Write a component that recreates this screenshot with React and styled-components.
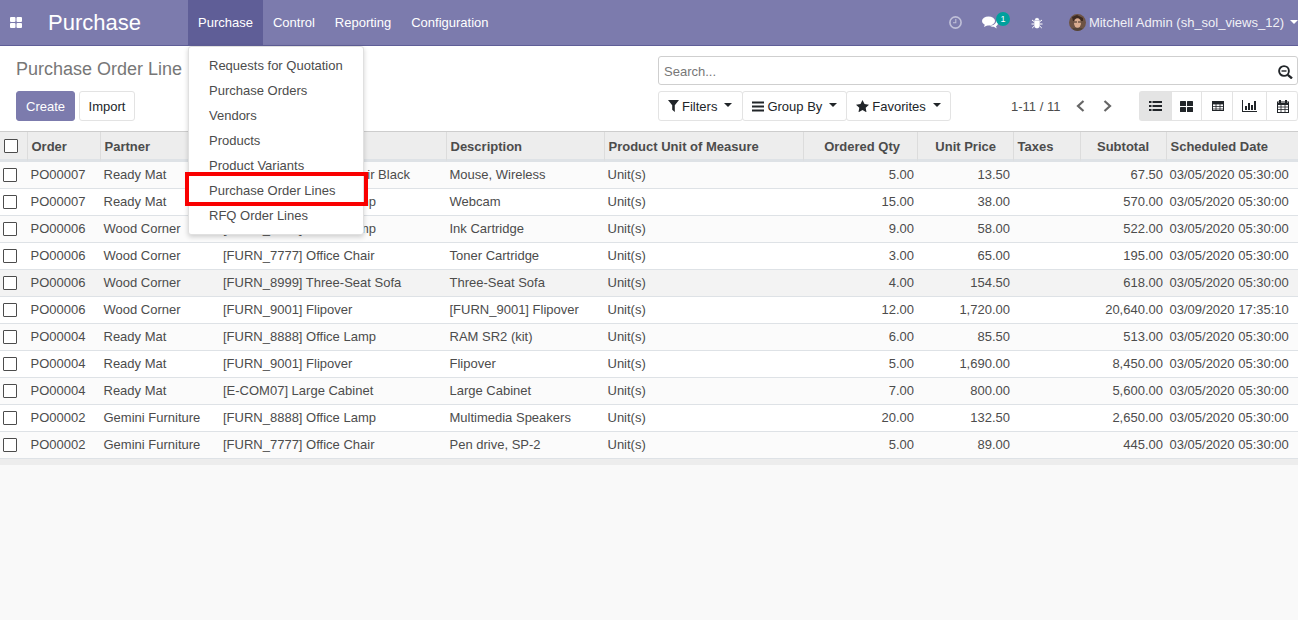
import { createGlobalStyle, styled } from "styled-components";

const GlobalStyle = createGlobalStyle`
  html, body {
    margin: 0;
    height: 100%;
    background: #f9f9f9;
    font-family: "Liberation Sans", Arial, sans-serif;
    font-size: 13px;
    color: #4c4c4c;
  }
  * { box-sizing: border-box; }
`;

const Page = styled.div`
  width: 1298px;
  height: 620px;
  overflow: hidden;
  position: relative;
`;

const Navbar = styled.header`
  height: 46px;
  background: #7c7bad;
  border-bottom: 1px solid #5f5e97;
  display: flex;
  align-items: stretch;
  color: #fff;
`;
const AppsToggle = styled.div`
  width: 32px;
  display: flex;
  align-items: center;
  justify-content: center;
`;
const Brand = styled.div`
  font-size: 22px;
  width: 156px;
  padding-left: 16px;
  line-height: 45px;
`;
const NavItem = styled.div`
  padding: 0 10px;
  line-height: 45px;
  background: ${p => (p.$open ? "#5f5e97" : "transparent")};
`;
const NavRight = styled.div`
  margin-left: auto;
  display: flex;
  align-items: center;
  white-space: nowrap;
`;
const SysIcon = styled.div`
  position: relative;
  display: flex;
  align-items: center;
  justify-content: center;
  margin-left: ${p => p.$ml || 0}px;
`;
const Badge = styled.span`
  position: absolute;
  top: -4px;
  left: 14px;
  width: 14px;
  height: 14px;
  border-radius: 7px;
  background: #00a09d;
  color: #fff;
  font-size: 9px;
  line-height: 14px;
  text-align: center;
`;
const Avatar = styled.svg`
  width: 17px;
  height: 17px;
  border-radius: 50%;
  margin-right: 3px;
  margin-left: 26px;
`;
const UserName = styled.span`
  color: #f0f0f6;
`;
const Caret = styled.span`
  display: inline-block;
  border-top: 4px solid ${p => p.$color || "#fff"};
  border-left: 4px solid transparent;
  border-right: 4px solid transparent;
  margin-left: ${p => p.$ml ?? 4}px;
  position: relative;
  top: -1px;
`;

const Dropdown = styled.ul`
  position: absolute;
  top: 46px;
  left: 188px;
  width: 176px;
  height: 189px;
  margin: 0;
  padding: 6px 0 0;
  list-style: none;
  background: #fff;
  border: 1px solid #e0e0e0;
  border-radius: 3px;
  box-shadow: 0 2px 5px rgba(0, 0, 0, 0.18);
  z-index: 5;
`;
const DropItem = styled.li`
  position: relative;
  height: 25px;
  line-height: 25px;
  padding-left: 20px;
  color: #4c4c4c;
  ${p =>
    p.$marked &&
    `&::after {
      content: "";
      position: absolute;
      left: -4px;
      right: -5px;
      top: -6px;
      bottom: -3px;
      border: 4px solid #f90000;
    }`}
`;

const ControlPanel = styled.section`
  height: 86px;
  background: #fff;
  border-bottom: 1px solid #cdcdcd;
  padding: 10px 0 0 16px;
  display: grid;
  grid-template-columns: 642px 1fr;
`;
const LeftPanel = styled.div`
  display: flex;
  flex-direction: column;
`;
const Title = styled.h1`
  margin: 0;
  height: 35px;
  font-size: 18px;
  font-weight: 400;
  line-height: 26px;
  color: #777;
`;
const Buttons = styled.div`
  display: flex;
  gap: 3.5px;
`;
const Button = styled.button`
  height: 30px;
  padding: 0 9px;
  font: inherit;
  border-radius: 3px;
  border: 1px solid ${p => (p.$primary ? "#7c7bad" : "#e3e3e3")};
  background: ${p => (p.$primary ? "#7c7bad" : "#fff")};
  color: ${p => (p.$primary ? "#fff" : "#212529")};
`;
const RightPanel = styled.div`
  display: flex;
  flex-direction: column;
  gap: 6px;
`;
const SearchBar = styled.div`
  height: 29px;
  border: 1px solid #cfcfcf;
  border-radius: 3px;
  display: flex;
  align-items: center;
  justify-content: space-between;
  padding: 2px 4px 0 5px;
  color: #777;
`;
const ToolRow = styled.div`
  display: flex;
  align-items: center;
`;
const FilterGroup = styled.div`
  display: flex;
  width: 353px;
`;
const FilterButton = styled.div`
  height: 30px;
  display: flex;
  align-items: center;
  gap: 3px;
  padding: 0 ${p => (p.$first ? 10 : 9)}px 0 9px;
  color: #212529;
  background: #fff;
  border: 1px solid #e3e3e3;
  border-radius: 3px;
  margin-left: ${p => (p.$first ? 0 : -1)}px;
`;
const Pager = styled.div`
  width: 128px;
  display: flex;
  align-items: center;
  color: #4c4c4c;
`;
const PagerText = styled.span`
  margin-right: 16px;
`;
const PagerArrow = styled.span`
  display: flex;
  width: 27px;
  color: #666;
`;
const Views = styled.div`
  display: flex;
  height: 30px;
  border: 1px solid #e3e3e3;
  border-right: none;
  border-radius: 3px;
`;
const ViewButton = styled.div`
  width: ${p => p.$w}px;
  padding-left: ${p => p.$pl || 0}px;
  display: flex;
  align-items: center;
  justify-content: center;
  color: #212529;
  background: ${p => (p.$active ? "#e4e4e4" : "#fff")};
  border-right: 1px solid #e3e3e3;
  &:last-child { border-radius: 0 3px 3px 0; }
`;

const Table = styled.table`
  width: 1298px;
  table-layout: fixed;
  border-collapse: separate;
  border-spacing: 0;
  background: #fff;
`;
const Col = styled.col`
  width: ${p => p.$w}px;
`;
const Th = styled.th`
  height: 30px;
  padding: 2px ${p => (p.$right ? 17 : 4)}px 1px 3.5px;
  background: #ededed;
  font-weight: 700;
  color: #4c4c4c;
  white-space: nowrap;
  overflow: hidden;
  text-align: ${p => (p.$right ? "right" : "left")};
  border-bottom: 3px solid #dee2e6;
  border-left: 1px solid #dcdcdc;
  &:first-child { border-left: none; padding-left: 4px; }
`;
const Row = styled.tr`
  background: ${p => (p.$hover ? "#f3f3f3" : p.$odd ? "#fbfbfb" : "#fff")};
`;
const Td = styled.td`
  height: 27px;
  padding: 0 3px 2px ${p => p.$pl ?? 3.5}px;
  border-bottom: 1px solid #dee2e6;
  white-space: nowrap;
  overflow: hidden;
  text-align: ${p => (p.$right ? "right" : "left")};
  &:first-child { padding-left: 3px; }
`;
const Check = styled.span`
  display: block;
  width: 14px;
  height: 14px;
  border: 1px solid #4c4c4c;
  border-radius: 1px;
  background: #fff;
  margin-top: ${p => (p.$row ? 1 : 0)}px;
`;
const Foot = styled.div`
  height: 6px;
  background: #ededed;
`;

const menu = [
  "Requests for Quotation",
  "Purchase Orders",
  "Vendors",
  "Products",
  "Product Variants",
  "Purchase Order Lines",
  "RFQ Order Lines",
];

const cols = [27, 73, 119, 227, 158, 199, 114, 96, 67, 86, 132];

const heads = [
  ["Order"],
  ["Partner"],
  ["Product"],
  ["Description"],
  ["Product Unit of Measure"],
  ["Ordered Qty", true],
  ["Unit Price", true],
  ["Taxes"],
  ["Subtotal", true],
  ["Scheduled Date"],
];

const d = "03/05/2020 05:30:00";
const rows = [
  ["PO00007", "Ready Mat", "[FURN_0269] Office Chair Black", "Mouse, Wireless", "5.00", "13.50", "67.50", d],
  ["PO00007", "Ready Mat", "[FURN_8888] Office Lamp", "Webcam", "15.00", "38.00", "570.00", d],
  ["PO00006", "Wood Corner", "[FURN_8888] Office Lamp", "Ink Cartridge", "9.00", "58.00", "522.00", d],
  ["PO00006", "Wood Corner", "[FURN_7777] Office Chair", "Toner Cartridge", "3.00", "65.00", "195.00", d],
  ["PO00006", "Wood Corner", "[FURN_8999] Three-Seat Sofa", "Three-Seat Sofa", "4.00", "154.50", "618.00", d],
  ["PO00006", "Wood Corner", "[FURN_9001] Flipover", "[FURN_9001] Flipover", "12.00", "1,720.00", "20,640.00", "03/09/2020 17:35:10"],
  ["PO00004", "Ready Mat", "[FURN_8888] Office Lamp", "RAM SR2 (kit)", "6.00", "85.50", "513.00", d],
  ["PO00004", "Ready Mat", "[FURN_9001] Flipover", "Flipover", "5.00", "1,690.00", "8,450.00", d],
  ["PO00004", "Ready Mat", "[E-COM07] Large Cabinet", "Large Cabinet", "7.00", "800.00", "5,600.00", d],
  ["PO00002", "Gemini Furniture", "[FURN_8888] Office Lamp", "Multimedia Speakers", "20.00", "132.50", "2,650.00", d],
  ["PO00002", "Gemini Furniture", "[FURN_7777] Office Chair", "Pen drive, SP-2", "5.00", "89.00", "445.00", d],
];

const AppsIcon = () => (
  <svg width="12" height="11" viewBox="0 0 12 11" fill="#fff">
    <rect x="0" y="0" width="5.500" height="5" rx="1" />
    <rect x="6.500" y="0" width="5.500" height="5" rx="1" />
    <rect x="0" y="6" width="5.500" height="5" rx="1" />
    <rect x="6.500" y="6" width="5.500" height="5" rx="1" />
  </svg>
);

const ClockIcon = () => (
  <svg width="13" height="13" viewBox="0 0 13 13" fill="none" stroke="#c0c0d8" strokeWidth="1.6">
    <circle cx="6.5" cy="6.5" r="5.6" />
    <path d="M6.8 3v3.8H4" strokeWidth="1.1" />
  </svg>
);

const ChatIcon = () => (
  <svg width="16" height="14" viewBox="0 0 16 14" fill="#fff">
    <ellipse cx="6.5" cy="5" rx="6.5" ry="4.6" />
    <path d="M3 8l-1 3 4-2z" />
    <path d="M14.2 4.4c1.2.8 1.8 1.8 1.8 2.9 0 1.2-.8 2.3-2 3l.8 2.2-3-1.7c-1.500.1-3.200-.3-4.200-1.200 3.400.2 6.800-1.800 6.600-5.200z" />
  </svg>
);

const BugIcon = () => (
  <svg width="12" height="12" viewBox="0 0 12 12" fill="#fff" stroke="#fff">
    <path d="M3.300 3.500h5.400v4.300a2.700 3.500 0 0 1-5.400 0z" strokeWidth="0.2" />
    <path d="M4 3a2 2 0 0 1 4 0z" strokeWidth="0.2" />
    <path d="M3 4.500L1 3M9 4.500L11 3M3 7H.5M9 7h2.500M3.300 9L1.200 11M8.700 9l2.100 2" strokeWidth="1" fill="none" />
  </svg>
);

const FaceAvatar = () => (
  <Avatar viewBox="0 0 17 17">
    <rect width="17" height="17" fill="#6d5344" />
    <path d="M3 3l5-2 6 3v3H4z" fill="#3d2a20" />
    <ellipse cx="8.500" cy="9" rx="3.500" ry="4.800" fill="#d9ac90" />
    <path d="M5 8h3M9 8h3" stroke="#3a2a20" strokeWidth="1" />
    <path d="M2 17l2-3h9l2 3z" fill="#534438" />
  </Avatar>
);

const SearchIcon = () => (
  <svg width="15" height="14" viewBox="0 0 15 14" fill="none" stroke="#212529">
    <circle cx="6" cy="6" r="4.900" strokeWidth="1.900" />
    <path d="M3.500 6h5" strokeWidth="1.400" />
    <path d="M9.800 9.800l4.200 3.600" strokeWidth="2.400" />
  </svg>
);

const FilterIcon = () => (
  <svg width="11" height="12" viewBox="0 0 11 12" fill="#212529">
    <path d="M0 0h11L6.800 5.200V12L4.200 9.800V5.200z" />
  </svg>
);

const BarsIcon = () => (
  <svg width="12" height="11" viewBox="0 0 12 11" fill="#212529">
    <rect y="0.500" width="12" height="2" />
    <rect y="4.500" width="12" height="2" />
    <rect y="8.500" width="12" height="2" />
  </svg>
);

const StarIcon = () => (
  <svg width="13" height="12" viewBox="0 0 13 12" fill="#212529">
    <path d="M6.500 0l2 4.100 4.500.6-3.300 3.100.8 4.500-4-2.200-4 2.200.8-4.500L0 4.700l4.500-.6z" />
  </svg>
);

const ChevronLeft = () => (
  <svg width="9" height="12" viewBox="0 0 9 12" fill="none" stroke="#666" strokeWidth="2.200">
    <path d="M7.500 1L2 6l5.500 5" />
  </svg>
);

const ChevronRight = () => (
  <svg width="9" height="12" viewBox="0 0 9 12" fill="none" stroke="#666" strokeWidth="2.200">
    <path d="M1.500 1L7 6l-5.500 5" />
  </svg>
);

const ListIcon = () => (
  <svg width="13" height="10" viewBox="0 0 13 10" fill="#212529">
    <rect x="0" y="0" width="2.500" height="2" />
    <rect x="3.500" y="0" width="9.500" height="2" />
    <rect x="0" y="4" width="2.500" height="2" />
    <rect x="3.500" y="4" width="9.500" height="2" />
    <rect x="0" y="8" width="2.500" height="2" />
    <rect x="3.500" y="8" width="9.500" height="2" />
  </svg>
);

const KanbanIcon = () => (
  <svg width="13" height="11" viewBox="0 0 13 11" fill="#212529">
    <rect x="0" y="0" width="6" height="5" rx="0.500" />
    <rect x="7" y="0" width="6" height="5" rx="0.500" />
    <rect x="0" y="6" width="6" height="5" rx="0.500" />
    <rect x="7" y="6" width="6" height="5" rx="0.500" />
  </svg>
);

const GridIcon = () => (
  <svg width="12" height="10" viewBox="0 0 12 10" fill="none" stroke="#212529">
    <rect x="0.500" y="0.500" width="11" height="9" />
    <path d="M0 3h12M0 5.500h12M0 8h12M4 3v7M8 3v7" strokeWidth="0.800" />
    <rect x="0.500" y="0.500" width="11" height="2" fill="#212529" />
  </svg>
);

const ChartIcon = () => (
  <svg width="15" height="12" viewBox="0 0 15 12" fill="#212529">
    <path d="M0 0h1v11h14v1H0z" />
    <rect x="3" y="6" width="2" height="4" />
    <rect x="6" y="3" width="2" height="7" />
    <rect x="9" y="5" width="2" height="5" />
    <rect x="12" y="1" width="2" height="9" />
  </svg>
);

const CalendarIcon = () => (
  <svg width="12" height="13" viewBox="0 0 12 13" fill="none" stroke="#212529">
    <rect x="0.500" y="2" width="11" height="10.500" />
    <path d="M0 4h12" strokeWidth="2" />
    <path d="M3 0v3M9 0v3" strokeWidth="2" />
    <path d="M0 7h12M0 9.500h12M4 5v8M8 5v8" strokeWidth="0.800" />
  </svg>
);

const App = () => {
  return (
    <Page>
      <GlobalStyle />
      <Navbar>
        <AppsToggle>
          <AppsIcon />
        </AppsToggle>
        <Brand>Purchase</Brand>
        <NavItem $open>Purchase</NavItem>
        <NavItem>Control</NavItem>
        <NavItem>Reporting</NavItem>
        <NavItem>Configuration</NavItem>
        <NavRight>
          <SysIcon>
            <ClockIcon />
          </SysIcon>
          <SysIcon $ml={20}>
            <ChatIcon />
            <Badge>1</Badge>
          </SysIcon>
          <SysIcon $ml={33}>
            <BugIcon />
          </SysIcon>
          <FaceAvatar />
          <UserName>Mitchell Admin (sh_sol_views_12)</UserName>
          <Caret $ml={6} />
        </NavRight>
      </Navbar>

      <Dropdown>
        {menu.map(m => (
          <DropItem key={m} $marked={m === "Purchase Order Lines"}>
            {m}
          </DropItem>
        ))}
      </Dropdown>

      <ControlPanel>
        <LeftPanel>
          <Title>Purchase Order Line</Title>
          <Buttons>
            <Button $primary>Create</Button>
            <Button>Import</Button>
          </Buttons>
        </LeftPanel>
        <RightPanel>
          <SearchBar>
            Search...
            <SearchIcon />
          </SearchBar>
          <ToolRow>
            <FilterGroup>
              <FilterButton $first>
                <FilterIcon /> Filters <Caret $color="#212529" />
              </FilterButton>
              <FilterButton>
                <BarsIcon /> Group By <Caret $color="#212529" />
              </FilterButton>
              <FilterButton>
                <StarIcon /> Favorites <Caret $color="#212529" />
              </FilterButton>
            </FilterGroup>
            <Pager>
              <PagerText>1-11 / 11</PagerText>
              <PagerArrow>
                <ChevronLeft />
              </PagerArrow>
              <PagerArrow>
                <ChevronRight />
              </PagerArrow>
            </Pager>
            <Views>
              <ViewButton $w={32} $active>
                <ListIcon />
              </ViewButton>
              <ViewButton $w={30}>
                <KanbanIcon />
              </ViewButton>
              <ViewButton $w={31} $pl={2}>
                <GridIcon />
              </ViewButton>
              <ViewButton $w={34}>
                <ChartIcon />
              </ViewButton>
              <ViewButton $w={31} $pl={2}>
                <CalendarIcon />
              </ViewButton>
            </Views>
          </ToolRow>
        </RightPanel>
      </ControlPanel>

      <Table>
        <colgroup>
          {cols.map((w, i) => (
            <Col key={i} $w={w} />
          ))}
        </colgroup>
        <thead>
          <tr>
            <Th>
              <Check />
            </Th>
            {heads.map(([h, right]) => (
              <Th key={h} $right={right}>
                {h}
              </Th>
            ))}
          </tr>
        </thead>
        <tbody>
          {rows.map((r, i) => (
            <Row key={i} $odd={i % 2 === 0} $hover={i === 4}>
              <Td>
                <Check $row />
              </Td>
              <Td>{r[0]}</Td>
              <Td>{r[1]}</Td>
              <Td $pl={4}>{r[2]}</Td>
              <Td>{r[3]}</Td>
              <Td>Unit(s)</Td>
              <Td $right>{r[4]}</Td>
              <Td $right>{r[5]}</Td>
              <Td />
              <Td $right>{r[6]}</Td>
              <Td>{r[7]}</Td>
            </Row>
          ))}
        </tbody>
      </Table>
      <Foot />
    </Page>
  );
};

export default App;
